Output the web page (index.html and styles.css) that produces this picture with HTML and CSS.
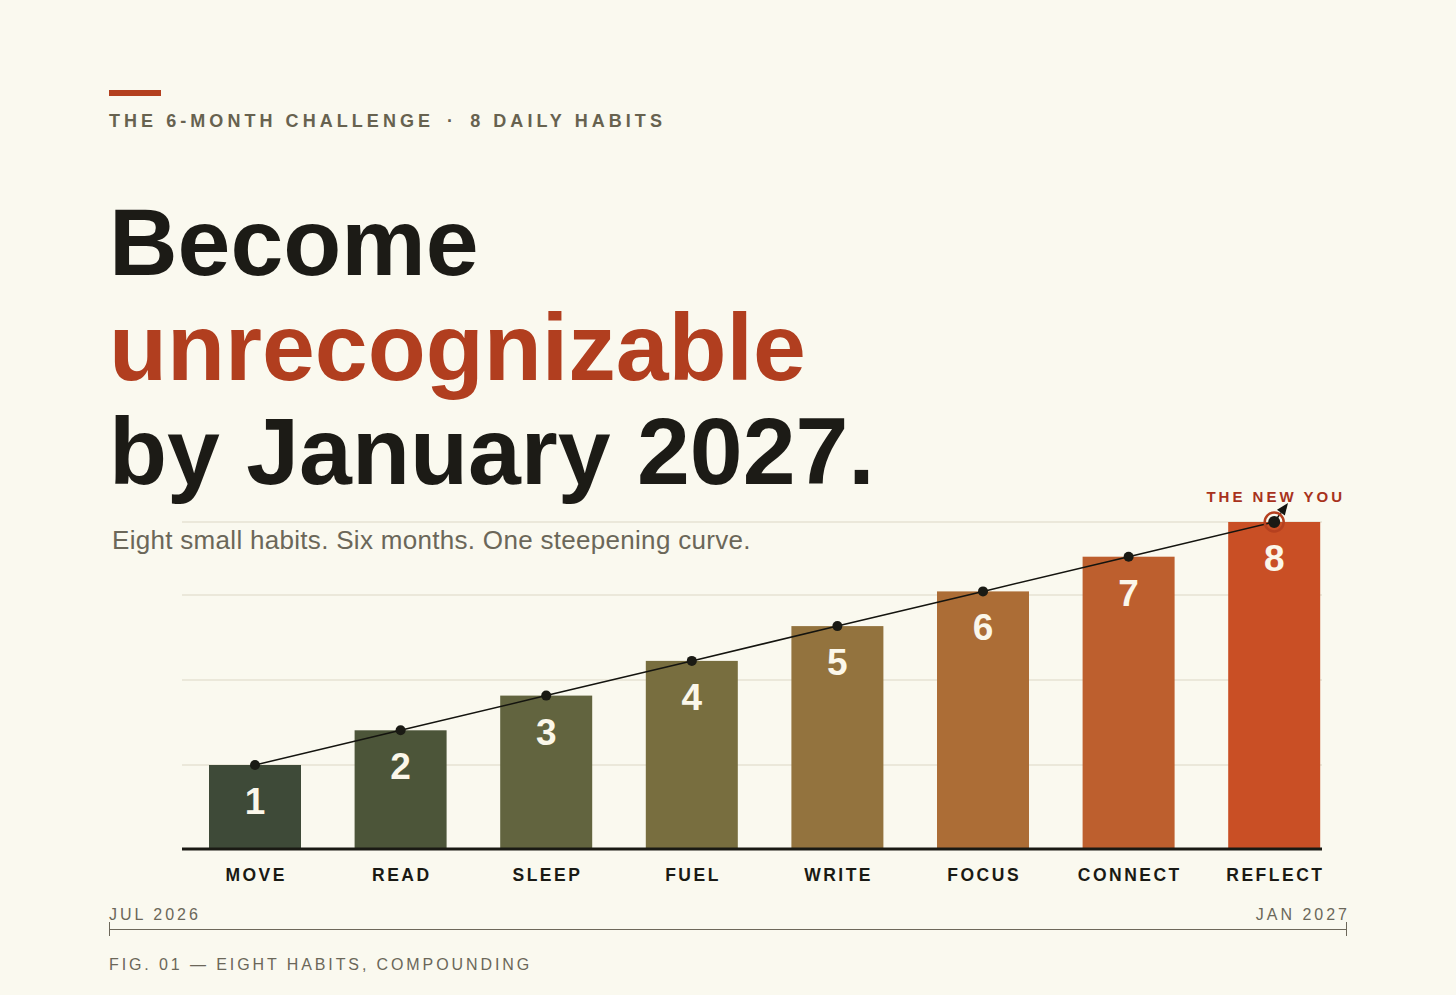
FILE: index.html
```html
<!DOCTYPE html>
<html lang="en">
<head>
<meta charset="utf-8">
<title>Become unrecognizable by January 2027</title>
<link rel="stylesheet" href="styles.css">
</head>
<body>
<main class="page">
  <div class="rule"></div>
  <p class="eyebrow">THE 6-MONTH CHALLENGE <span class="dot">·</span> 8 DAILY HABITS</p>

  <section class="stage">
    <div class="copy">
      <h1 class="headline">Become<br><span class="accent">unrecognizable</span><br>by January 2027.</h1>
      <p class="subtitle">Eight small habits. Six months. One steepening curve.</p>
    </div>

    <svg class="chart" width="1238" height="410" viewBox="0 0 1238 410" xmlns="http://www.w3.org/2000/svg">
      <g class="grid">
        <line x1="73" y1="42" x2="1213" y2="42"/>
        <line x1="73" y1="115" x2="1213" y2="115"/>
        <line x1="73" y1="200" x2="1213" y2="200"/>
        <line x1="73" y1="285" x2="1213" y2="285"/>
      </g>

      <rect class="bar b1" x="100" y="285" width="92" height="83"/>
      <rect class="bar b2" x="245.6" y="250.3" width="92" height="117.7"/>
      <rect class="bar b3" x="391.2" y="215.6" width="92" height="152.4"/>
      <rect class="bar b4" x="536.8" y="180.9" width="92" height="187.1"/>
      <rect class="bar b5" x="682.4" y="146.1" width="92" height="221.9"/>
      <rect class="bar b6" x="828" y="111.4" width="92" height="256.6"/>
      <rect class="bar b7" x="973.6" y="76.7" width="92" height="291.3"/>
      <rect class="bar b8" x="1119.2" y="42" width="92" height="326"/>

      <line class="baseline" x1="73" y1="369" x2="1213" y2="369"/>

      <g class="num">
        <text x="146" y="334">1</text>
        <text x="291.6" y="299.3">2</text>
        <text x="437.2" y="264.6">3</text>
        <text x="582.8" y="229.9">4</text>
        <text x="728.4" y="195.1">5</text>
        <text x="874" y="160.4">6</text>
        <text x="1019.6" y="125.7">7</text>
        <text x="1165.2" y="91">8</text>
      </g>

      <polyline class="trend" points="146,285 291.6,250.3 437.2,215.6 582.8,180.9 728.4,146.1 874,111.4 1019.6,76.7 1165.2,42"/>
      <line class="trend" x1="1165.2" y1="42" x2="1172" y2="32.7"/>
      <polygon class="head" points="1179,23 1175.8,35.6 1168,29.8"/>

      <g class="dots">
        <circle cx="146" cy="285" r="5"/>
        <circle cx="291.6" cy="250.3" r="5"/>
        <circle cx="437.2" cy="215.6" r="5"/>
        <circle cx="582.8" cy="180.9" r="5"/>
        <circle cx="728.4" cy="146.1" r="5"/>
        <circle cx="874" cy="111.4" r="5"/>
        <circle cx="1019.6" cy="76.7" r="5"/>
        <circle cx="1165.2" cy="42" r="6"/>
      </g>
      <circle class="ring" cx="1165.2" cy="42" r="9.5"/>

      <text class="callout" x="1166.7" y="22">THE NEW YOU</text>

      <g class="label">
        <text x="147.2" y="401">MOVE</text>
        <text x="292.8" y="401">READ</text>
        <text x="438.4" y="401">SLEEP</text>
        <text x="584" y="401">FUEL</text>
        <text x="729.6" y="401">WRITE</text>
        <text x="875.2" y="401">FOCUS</text>
        <text x="1020.8" y="401">CONNECT</text>
        <text x="1166.4" y="401">REFLECT</text>
      </g>
    </svg>
  </section>

  <div class="timeline">
    <div class="dates">
      <span>JUL 2026</span>
      <span class="end">JAN 2027</span>
    </div>
    <div class="axis"></div>
  </div>

  <p class="caption">FIG. 01 — EIGHT HABITS, COMPOUNDING</p>
</main>
</body>
</html>
```
FILE: styles.css
```css
* { box-sizing: border-box; }

html, body {
  margin: 0;
  padding: 0;
  background: #faf9ef;
}

body {
  font-family: "Liberation Sans", Arial, sans-serif;
  color: #1c1b16;
}

.page {
  width: 1456px;
  height: 995px;
  padding: 90px 109px 0 109px;
  overflow: hidden;
}

.rule {
  width: 52px;
  height: 6px;
  background: #b3401f;
}

.eyebrow {
  margin: 14px 0 0 0;
  font-size: 18px;
  line-height: 22px;
  font-weight: 700;
  letter-spacing: 4.05px;
  color: #67624f;
}

.eyebrow .dot {
  margin: 0 4px;
}

.stage {
  display: grid;
  margin-top: 58px;
}

.copy,
.chart {
  grid-area: 1 / 1;
}

.copy {
  position: relative;
  z-index: 1;
}

.headline {
  margin: 0;
  font-size: 95px;
  line-height: 104.5px;
  font-weight: 700;
  color: #1c1b16;
}

.headline .accent {
  color: #b13e1f;
}

.subtitle {
  margin: 20px 0 0 3px;
  font-size: 26px;
  line-height: 32px;
  letter-spacing: 0.3px;
  color: #6b6759;
}

.chart {
  display: block;
  margin-top: 290px;
  overflow: visible;
}

.grid line {
  stroke: #e6e2d3;
  stroke-width: 1.3;
}

.bar.b1 { fill: #3e4a38; }
.bar.b2 { fill: #4c5539; }
.bar.b3 { fill: #62643f; }
.bar.b4 { fill: #786e3f; }
.bar.b5 { fill: #93733e; }
.bar.b6 { fill: #ac6d36; }
.bar.b7 { fill: #bd5f2e; }
.bar.b8 { fill: #c94f25; }

.baseline {
  stroke: #1a1a14;
  stroke-width: 3;
}

.num text {
  font-family: "Liberation Sans", Arial, sans-serif;
  font-size: 37px;
  font-weight: 700;
  fill: #fbf7ea;
  text-anchor: middle;
}

.trend {
  fill: none;
  stroke: #14140f;
  stroke-width: 1.5;
}

.head {
  fill: #14140f;
}

.dots circle {
  fill: #1a1a14;
}

.ring {
  fill: none;
  stroke: #b5401f;
  stroke-width: 2.5;
}

.callout {
  font-family: "Liberation Sans", Arial, sans-serif;
  font-size: 15px;
  font-weight: 700;
  letter-spacing: 3px;
  fill: #a8321c;
  text-anchor: middle;
}

.label text {
  font-family: "Liberation Sans", Arial, sans-serif;
  font-size: 17.5px;
  font-weight: 700;
  letter-spacing: 2.5px;
  fill: #1a1a14;
  text-anchor: middle;
}

.timeline {
  margin-top: 18px;
}

.dates {
  display: flex;
  justify-content: space-between;
  font-size: 16px;
  line-height: 14px;
  letter-spacing: 3px;
  color: #6b6759;
}

.dates .end {
  margin-right: -3px;
}

.axis {
  height: 14px;
  border-left: 1px solid #6d685a;
  border-right: 1px solid #6d685a;
  background: linear-gradient(#6d685a, #6d685a) center / 100% 1px no-repeat;
}

.caption {
  margin: 19px 0 0 0;
  font-size: 16px;
  line-height: 20px;
  letter-spacing: 2.9px;
  color: #6b6759;
}
```
